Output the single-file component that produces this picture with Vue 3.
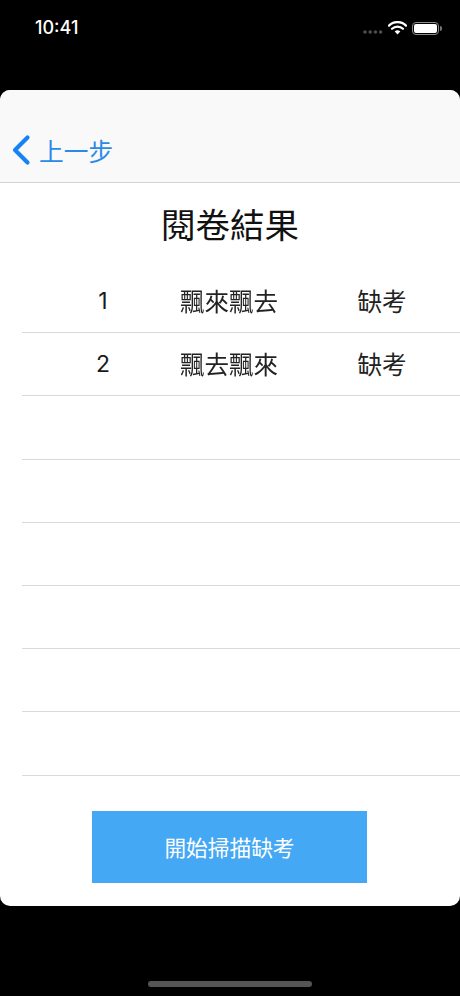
<script setup>
const rows = [
  { no: '1', name: '飄來飄去', status: '缺考' },
  { no: '2', name: '飄去飄來', status: '缺考' },
  {}, {}, {}, {}, {}, {}
]
</script>

<template>
  <div class="screen">
    <div class="status">
      <span class="time">10:41</span>
      <div class="indicators">
        <svg class="signal" width="20" height="4" viewBox="0 0 20 4">
          <circle cx="2" cy="2" r="1.8" fill="#4d4d4d" />
          <circle cx="7.2" cy="2" r="1.8" fill="#4d4d4d" />
          <circle cx="12.4" cy="2" r="1.8" fill="#4d4d4d" />
          <circle cx="17.6" cy="2" r="1.8" fill="#4d4d4d" />
        </svg>
        <svg class="wifi" width="19" height="14" viewBox="0 0 19 14">
          <path d="M1 4.6a12 12 0 0 1 17 0" fill="none" stroke="#fff" stroke-width="2.2" stroke-linecap="round" />
          <path d="M4 7.8a7.8 7.8 0 0 1 11 0" fill="none" stroke="#fff" stroke-width="2.2" stroke-linecap="round" />
          <path d="M6.7 10.6 9.5 13.4l2.8-2.8a4 4 0 0 0-5.6 0Z" fill="#fff" />
        </svg>
        <div class="battery"><div class="charge"></div></div>
      </div>
    </div>

    <main class="card">
      <header class="nav">
        <svg class="chevron" width="20" height="32" viewBox="0 0 20 32">
          <path d="M16.5 3.5 4 16l12.5 12.5" fill="none" stroke="#1583f2" stroke-width="4.2" stroke-linecap="round" stroke-linejoin="round" />
        </svg>
        <span class="back">上一步</span>
      </header>

      <h1 class="title">閱卷結果</h1>

      <div class="list">
        <div v-for="(row, i) in rows" :key="i" class="row">
          <span class="num">{{ row.no }}</span>
          <span class="name">{{ row.name }}</span>
          <span class="state">{{ row.status }}</span>
        </div>
      </div>

      <div class="action">
        <button class="scan" type="button">開始掃描缺考</button>
      </div>
    </main>

    <div class="home-area"><div class="home"></div></div>
  </div>
</template>

<style>
html, body { margin: 0; background: #000; }
</style>

<style scoped>
.screen {
  width: 460px;
  height: 996px;
  background: #000;
  display: flex;
  flex-direction: column;
  overflow: hidden;
  font-family: "Noto Sans CJK TC", "Noto Sans", sans-serif;
}
.status {
  height: 90px;
  box-sizing: border-box;
  padding: 16px 21px 0 35px;
  display: flex;
  justify-content: space-between;
  align-items: flex-start;
  color: #fff;
}
.time {
  font: 500 18px/24px Inter, Roboto, sans-serif;
}
.indicators {
  display: flex;
  align-items: center;
  gap: 5px;
  height: 24px;
}
.signal { margin-top: 7px; }
.wifi { margin-top: -1px; }
.battery {
  width: 27px;
  height: 13px;
  box-sizing: border-box;
  border: 1px solid #8a8a8a;
  border-radius: 4px;
  padding: 1px;
  position: relative;
}
.battery::after {
  content: "";
  position: absolute;
  right: -4px;
  top: 3px;
  width: 2px;
  height: 5px;
  border-radius: 0 2px 2px 0;
  background: #777;
}
.charge {
  width: 100%;
  height: 100%;
  background: #fff;
  border-radius: 2px;
}
.card {
  height: 816px;
  background: #fff;
  border-radius: 10px;
  overflow: hidden;
  display: flex;
  flex-direction: column;
}
.nav {
  height: 93px;
  box-sizing: border-box;
  background: #f9f9fa;
  border-bottom: 1px solid #d2d2d4;
  padding: 0 0 15px 11px;
  display: flex;
  align-items: flex-end;
  gap: 8px;
}
.chevron { margin-bottom: 1px; }
.back {
  color: #2a8ae8;
  font-size: 24.7px;
  line-height: 34px;
}
.title {
  margin: 0;
  height: 87px;
  padding-top: 18px;
  box-sizing: border-box;
  text-align: center;
  color: #111;
  font-size: 34.5px;
  font-weight: 400;
  line-height: 44px;
}
.list {
  margin-left: 22px;
}
.row {
  height: 63.2px;
  box-sizing: border-box;
  border-bottom: 1px solid #d9d9db;
  padding-left: 59px;
  display: grid;
  grid-template-columns: 44px 208px 98px;
  align-items: center;
  text-align: center;
  color: #222;
  font-size: 24.5px;
  line-height: 34px;
}
.name {
  will-change: opacity;
}
.num {
  font-family: Inter, Roboto, sans-serif;
  font-size: 23px;
  color: #1a1a1a;
}
.action {
  padding: 35px 1px 0 0;
  display: flex;
  justify-content: center;
}
.scan {
  width: 275px;
  height: 72px;
  border: 0;
  padding: 0;
  background: #44a8f4;
  color: #fff;
  font-family: inherit;
  font-size: 21.7px;
}
.home-area {
  flex: 1;
  display: flex;
  align-items: flex-end;
  justify-content: center;
  padding-bottom: 9px;
}
.home {
  width: 164px;
  height: 6px;
  border-radius: 3px;
  background: #555;
}
</style>
